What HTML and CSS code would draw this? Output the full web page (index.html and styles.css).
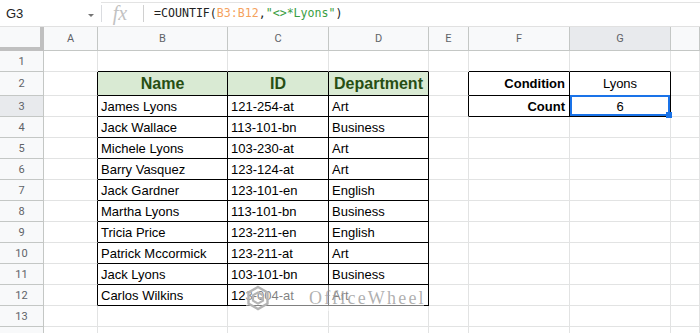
FILE: index.html
```html
<!DOCTYPE html>
<html lang="en">
<head>
    <meta charset="UTF-8">
    <meta name="viewport" content="width=device-width, initial-scale=1.0">
    <title>COUNTIF Lyons</title>
    <link rel="stylesheet" href="styles.css">
</head>
<body>
    <div class="formula-bar">
        <div class="name-box">G3<span class="caret"></span></div>
        <div class="fx">fx</div>
        <div class="formula">=COUNTIF(<span class="ref">B3:B12</span>,<span class="str">"&lt;&gt;*Lyons"</span>)</div>
    </div>

    <div class="sheet">
        <!-- column headers -->
        <div class="corner"></div>
        <div class="ch">A</div>
        <div class="ch">B</div>
        <div class="ch">C</div>
        <div class="ch">D</div>
        <div class="ch">E</div>
        <div class="ch">F</div>
        <div class="ch sel">G</div>
        <div class="ch"></div>

        <!-- row 1 -->
        <div class="rh">1</div>
        <div class="c"></div>
        <div class="c tt"></div>
        <div class="c tt"></div>
        <div class="c tt"></div>
        <div class="c"></div>
        <div class="c tt"></div>
        <div class="c tt"></div>
        <div class="c"></div>

        <!-- row 2 -->
        <div class="rh">2</div>
        <div class="c tl"></div>
        <div class="c bx hd">Name</div>
        <div class="c bx hd">ID</div>
        <div class="c bx hd">Department</div>
        <div class="c tl"></div>
        <div class="c bx rt b">Condition</div>
        <div class="c bx ctr">Lyons</div>
        <div class="c"></div>

        <!-- row 3 -->
        <div class="rh sel">3</div>
        <div class="c tl"></div>
        <div class="c bx">James Lyons</div>
        <div class="c bx">121-254-at</div>
        <div class="c bx">Art</div>
        <div class="c tl"></div>
        <div class="c bx rt b">Count</div>
        <div class="c bx ctr active">6<span class="selection"><span class="handle"></span></span></div>
        <div class="c"></div>

        <!-- row 4 -->
        <div class="rh">4</div>
        <div class="c tl"></div>
        <div class="c bx">Jack Wallace</div>
        <div class="c bx">113-101-bn</div>
        <div class="c bx">Business</div>
        <div class="c"></div>
        <div class="c"></div>
        <div class="c"></div>
        <div class="c"></div>

        <!-- row 5 -->
        <div class="rh">5</div>
        <div class="c tl"></div>
        <div class="c bx">Michele Lyons</div>
        <div class="c bx">103-230-at</div>
        <div class="c bx">Art</div>
        <div class="c"></div>
        <div class="c"></div>
        <div class="c"></div>
        <div class="c"></div>

        <!-- row 6 -->
        <div class="rh">6</div>
        <div class="c tl"></div>
        <div class="c bx">Barry Vasquez</div>
        <div class="c bx">123-124-at</div>
        <div class="c bx">Art</div>
        <div class="c"></div>
        <div class="c"></div>
        <div class="c"></div>
        <div class="c"></div>

        <!-- row 7 -->
        <div class="rh">7</div>
        <div class="c tl"></div>
        <div class="c bx">Jack Gardner</div>
        <div class="c bx">123-101-en</div>
        <div class="c bx">English</div>
        <div class="c"></div>
        <div class="c"></div>
        <div class="c"></div>
        <div class="c"></div>

        <!-- row 8 -->
        <div class="rh">8</div>
        <div class="c tl"></div>
        <div class="c bx">Martha Lyons</div>
        <div class="c bx">113-101-bn</div>
        <div class="c bx">Business</div>
        <div class="c"></div>
        <div class="c"></div>
        <div class="c"></div>
        <div class="c"></div>

        <!-- row 9 -->
        <div class="rh">9</div>
        <div class="c tl"></div>
        <div class="c bx">Tricia Price</div>
        <div class="c bx">123-211-en</div>
        <div class="c bx">English</div>
        <div class="c"></div>
        <div class="c"></div>
        <div class="c"></div>
        <div class="c"></div>

        <!-- row 10 -->
        <div class="rh">10</div>
        <div class="c tl"></div>
        <div class="c bx">Patrick Mccormick</div>
        <div class="c bx">123-211-at</div>
        <div class="c bx">Art</div>
        <div class="c"></div>
        <div class="c"></div>
        <div class="c"></div>
        <div class="c"></div>

        <!-- row 11 -->
        <div class="rh">11</div>
        <div class="c tl"></div>
        <div class="c bx">Jack Lyons</div>
        <div class="c bx">103-101-bn</div>
        <div class="c bx">Business</div>
        <div class="c"></div>
        <div class="c"></div>
        <div class="c"></div>
        <div class="c"></div>

        <!-- row 12 -->
        <div class="rh">12</div>
        <div class="c tl"></div>
        <div class="c bx">Carlos Wilkins</div>
        <div class="c bx">123-004-at</div>
        <div class="c bx">Art</div>
        <div class="c"></div>
        <div class="c"></div>
        <div class="c"></div>
        <div class="c"></div>

        <!-- row 13 -->
        <div class="rh">13</div>
        <div class="c"></div>
        <div class="c"></div>
        <div class="c"></div>
        <div class="c"></div>
        <div class="c"></div>
        <div class="c"></div>
        <div class="c"></div>
        <div class="c"></div>

        <!-- row 14 -->
        <div class="rh">14</div>
        <div class="c"></div>
        <div class="c"></div>
        <div class="c"></div>
        <div class="c"></div>
        <div class="c"></div>
        <div class="c"></div>
        <div class="c"></div>
        <div class="c"></div>

        <div class="watermark">
            <svg class="wm-logo" width="24" height="26" viewBox="0 0 24 26">
                <path d="M12 2 L21.5 7.5 L21.5 18.5 L12 24 L2.5 18.5 L2.5 7.5 Z" fill="none" stroke="#b4b4b4" stroke-width="2.4"/>
                <path d="M16.5 10 L12 7.4 L7 10.3 L7 15.7 L12 18.6 L17 15.7 L17 13 L12.5 13" fill="none" stroke="#b4b4b4" stroke-width="2.2"/>
            </svg>
            <span class="wm-text">OfficeWheel</span>
        </div>
    </div>
</body>
</html>
```

FILE: styles.css
```css
body {
    margin: 0;
    padding: 0;
    width: 700px;
    height: 333px;
    overflow: hidden;
    background-color: #fff;
    font-family: "Liberation Sans", Arial, sans-serif;
}
.formula-bar {
    display: flex;
    align-items: center;
    height: 27px;
    box-sizing: border-box;
    border-bottom: 1px solid #e1e1e1;
    position: relative;
}
.formula-bar::before {
    content: "";
    position: absolute;
    left: 101px;
    right: 0;
    top: 2px;
    border-top: 1px solid #e3e3e3;
}
.name-box {
    width: 101px;
    height: 100%;
    box-sizing: border-box;
    padding: 0 0 0 6px;
    display: flex;
    align-items: center;
    font-size: 13px;
    color: #222;
    position: relative;
}
.caret {
    position: absolute;
    left: 88px;
    top: 14px;
    border-left: 3px solid transparent;
    border-right: 3px solid transparent;
    border-top: 3px solid #757575;
}
.fx {
    width: 43px;
    height: 17px;
    border-left: 1px solid #dadce0;
    border-right: 1px solid #d0d0d0;
    box-sizing: border-box;
    display: flex;
    align-items: center;
    justify-content: center;
    padding-right: 5px;
    font-family: "Liberation Serif", serif;
    font-style: italic;
    font-size: 20px;
    color: #c2c2c2;
}
.formula {
    padding-left: 10px;
    font-family: "DejaVu Sans Mono", monospace;
    font-size: 11.6px;
    color: #222;
}
.ref {
    color: #f5a25d;
}
.str {
    color: #3a9e43;
}
.sheet {
    display: grid;
    grid-template-columns: 44px 54px 130px 101px 100px 40px 101px 101px 1fr;
    grid-template-rows: 24px 21px 24px repeat(12, 21px);
    position: relative;
    font-size: 13px;
    color: #000;
}
.corner {
    background-color: #f8f9fa;
    border-right: 4px solid #c0c0c0;
    border-bottom: 4px solid #c0c0c0;
}
.ch, .rh {
    background-color: #f8f9fa;
    border-right: 1px solid #c4c7c5;
    border-bottom: 1px solid #c4c7c5;
    display: flex;
    align-items: center;
    justify-content: center;
    font-family: Roboto, sans-serif;
    font-size: 11px;
    color: #5f6368;
}
.ch.sel, .rh.sel {
    background-color: #e8eaed;
}
.c {
    border-right: 1px solid #e2e3e3;
    border-bottom: 1px solid #e2e3e3;
    display: flex;
    align-items: center;
    padding: 0 3px;
    white-space: nowrap;
    overflow: hidden;
}
.tl {
    border-right-color: #000;
}
.tt {
    border-bottom-color: #000;
}
.bx {
    border-right-color: #000;
    border-bottom-color: #000;
}
.hd {
    background-color: #d9ead3;
    color: #274e13;
    font-weight: bold;
    font-size: 16px;
    justify-content: center;
}
.ctr {
    justify-content: center;
}
.rt {
    justify-content: flex-end;
    padding-right: 4px;
}
.b {
    font-weight: bold;
}
.active {
    position: relative;
    overflow: visible;
}
.selection {
    position: absolute;
    left: 0;
    top: -1px;
    width: 100px;
    height: 21px;
    box-sizing: border-box;
    border: 2px solid #1a73e8;
}
.handle {
    position: absolute;
    right: -4px;
    bottom: -4px;
    width: 6px;
    height: 6px;
    background-color: #1a73e8;
}
.watermark {
    position: absolute;
    left: 246px;
    top: 258px;
    width: 178px;
    height: 26px;
    display: flex;
    align-items: center;
    gap: 39px;
    background-color: rgba(255, 255, 255, 0.5);
}
.wm-logo {
    flex: none;
}
.wm-text {
    font-family: "Liberation Serif", serif;
    font-size: 18px;
    letter-spacing: 2.2px;
    color: rgba(150, 150, 150, 0.75);
}
```
